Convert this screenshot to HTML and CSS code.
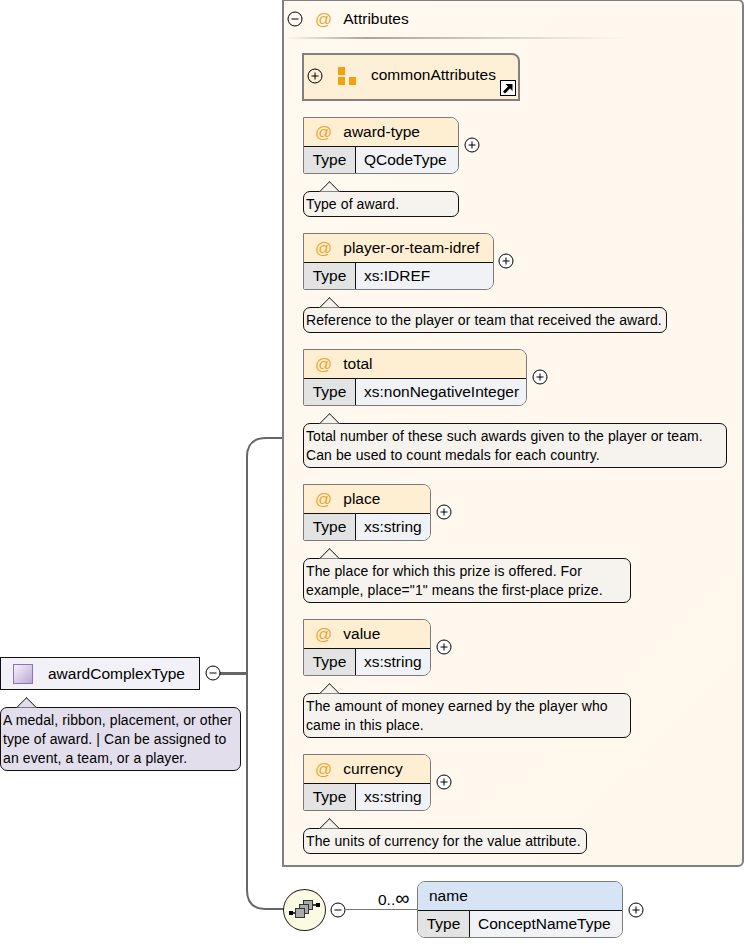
FILE: index.html
```html
<!DOCTYPE html>
<html lang="en">
<head>
<meta charset="utf-8">
<title>awardComplexType</title>
<link rel="stylesheet" href="styles.css">
</head>
<body>
<svg class="wires" width="745" height="945" viewBox="0 0 745 945">
  <path class="wire wire-main" d="M220 673.500H247"/>
  <path class="wire" d="M283 438H266Q247 438 247 457V890Q247 909 266 909H284"/>
  <path class="wire-thin" d="M346 909.500H418"/>
</svg>

<div class="root-node">
  <div class="root-box">
    <span class="type-icon"></span>
    <span class="root-name">awardComplexType</span>
  </div>
  <svg class="toggle root-toggle" viewBox="0 0 16 16"><circle cx="8" cy="8" r="7"/><path d="M4.500 8h7"/></svg>
  <div class="callout callout-root">A medal, ribbon, placement, or other type of award. | Can be assigned to an event, a team, or a player.</div>
</div>

<section class="panel">
  <header class="panel-head">
    <svg class="toggle" viewBox="0 0 16 16"><circle cx="8" cy="8" r="7"/><path d="M4.500 8h7"/></svg>
    <span class="at">@</span>
    <span class="panel-title">Attributes</span>
  </header>
  <div class="panel-body">
    <div class="group-ref">
      <svg class="toggle" viewBox="0 0 16 16"><circle cx="8" cy="8" r="7"/><path d="M4.500 8h7M8 4.500v7"/></svg>
      <svg class="group-icon" viewBox="0 0 18 18"><path d="M0 0h7v8H0zM0 10h7v8H0zM11 10h7v8h-7z"/></svg>
      <span class="group-name">commonAttributes</span>
      <svg class="ref-arrow" viewBox="0 0 16 16"><rect x=".5" y=".5" width="15" height="15"/><path d="M3 11.500L8 6.500 5.500 4H12.500V11L10 8.500 5 13.500z"/></svg>
    </div>

    <article class="attr">
      <div class="attr-row">
        <div class="card w-156">
          <div class="card-head"><span class="at">@</span><span>award-type</span></div>
          <div class="card-type"><span class="type-label">Type</span><span class="type-value">QCodeType</span></div>
        </div>
        <svg class="toggle" viewBox="0 0 16 16"><circle cx="8" cy="8" r="7"/><path d="M4.500 8h7M8 4.500v7"/></svg>
      </div>
      <div class="callout w-156">Type of award.</div>
    </article>

    <article class="attr">
      <div class="attr-row attr-row-tight">
        <div class="card w-191">
          <div class="card-head"><span class="at">@</span><span>player-or-team-idref</span></div>
          <div class="card-type"><span class="type-label">Type</span><span class="type-value">xs:IDREF</span></div>
        </div>
        <svg class="toggle" viewBox="0 0 16 16"><circle cx="8" cy="8" r="7"/><path d="M4.500 8h7M8 4.500v7"/></svg>
      </div>
      <div class="callout w-364">Reference to the player or team that received the award.</div>
    </article>

    <article class="attr">
      <div class="attr-row">
        <div class="card w-224">
          <div class="card-head"><span class="at">@</span><span>total</span></div>
          <div class="card-type"><span class="type-label">Type</span><span class="type-value">xs:nonNegativeInteger</span></div>
        </div>
        <svg class="toggle" viewBox="0 0 16 16"><circle cx="8" cy="8" r="7"/><path d="M4.500 8h7M8 4.500v7"/></svg>
      </div>
      <div class="callout w-424">Total number of these such awards given to the player or team. Can be used to count medals for each country.</div>
    </article>

    <article class="attr">
      <div class="attr-row">
        <div class="card w-128">
          <div class="card-head"><span class="at">@</span><span>place</span></div>
          <div class="card-type"><span class="type-label">Type</span><span class="type-value">xs:string</span></div>
        </div>
        <svg class="toggle" viewBox="0 0 16 16"><circle cx="8" cy="8" r="7"/><path d="M4.500 8h7M8 4.500v7"/></svg>
      </div>
      <div class="callout w-328">The place for which this prize is offered. For example, place="1" means the first-place prize.</div>
    </article>

    <article class="attr">
      <div class="attr-row">
        <div class="card w-128">
          <div class="card-head"><span class="at">@</span><span>value</span></div>
          <div class="card-type"><span class="type-label">Type</span><span class="type-value">xs:string</span></div>
        </div>
        <svg class="toggle" viewBox="0 0 16 16"><circle cx="8" cy="8" r="7"/><path d="M4.500 8h7M8 4.500v7"/></svg>
      </div>
      <div class="callout w-328">The amount of money earned by the player who came in this place.</div>
    </article>

    <article class="attr">
      <div class="attr-row">
        <div class="card w-128">
          <div class="card-head"><span class="at">@</span><span>currency</span></div>
          <div class="card-type"><span class="type-label">Type</span><span class="type-value">xs:string</span></div>
        </div>
        <svg class="toggle" viewBox="0 0 16 16"><circle cx="8" cy="8" r="7"/><path d="M4.500 8h7M8 4.500v7"/></svg>
      </div>
      <div class="callout w-284">The units of currency for the value attribute.</div>
    </article>
  </div>
</section>

<div class="seq-node">
  <div class="seq-circle">
    <svg viewBox="0 0 37 28" width="37" height="28">
      <path class="seq-line" d="M7 17h3M26 9h4"/>
      <path class="seq-dot" d="M3 15h4v4H3zM30 7h4v4h-4z"/>
      <rect class="seq-sq" x="17.500" y="4.500" width="9" height="9"/>
      <rect class="seq-sq" x="13.500" y="8.500" width="9" height="9"/>
      <rect class="seq-sq" x="9.500" y="12.500" width="9" height="9"/>
    </svg>
  </div>
  <svg class="toggle" viewBox="0 0 16 16"><circle cx="8" cy="8" r="7"/><path d="M4.500 8h7"/></svg>
  <span class="occurs">0..<span class="inf">∞</span></span>
  <div class="card card-name">
    <div class="card-head head-blue"><span>name</span></div>
    <div class="card-type"><span class="type-label">Type</span><span class="type-value">ConceptNameType</span></div>
  </div>
  <svg class="toggle" viewBox="0 0 16 16"><circle cx="8" cy="8" r="7"/><path d="M4.500 8h7M8 4.500v7"/></svg>
</div>
</body>
</html>
```
FILE: styles.css
```css
html, body {
  margin: 0;
  padding: 0;
}
body {
  position: relative;
  width: 745px;
  height: 945px;
  overflow: hidden;
  background: #fff;
  color: #000;
  font-family: "Liberation Sans", Arial, sans-serif;
  font-size: 15.5px;
}
.wires {
  position: absolute;
  left: 0;
  top: 0;
  fill: none;
}
.wire {
  fill: none;
  stroke: #666;
  stroke-width: 2;
}
.wire-main {
  stroke-width: 3;
}
.wire-thin {
  fill: none;
  stroke: #777;
  stroke-width: 1;
}
.toggle {
  flex: none;
  width: 16px;
  height: 16px;
  fill: #fff;
  stroke: #000;
  stroke-width: 1;
}
.panel .panel-head .toggle,
.panel .group-ref .toggle {
  fill: none;
}
.at {
  color: #eba52d;
  font-size: 17px;
  line-height: 1;
}

/* root node */
.root-node {
  position: absolute;
  left: 0;
  top: 657px;
  width: 245px;
}
.root-box {
  display: flex;
  align-items: center;
  box-sizing: border-box;
  width: 200px;
  height: 33px;
  border: 1px solid #111;
  background: #f3f1f8;
}
.type-icon {
  box-sizing: border-box;
  width: 20px;
  height: 20px;
  margin-left: 12px;
  border: 1px solid #8d72b5;
  background: linear-gradient(135deg, #f6f3fa, #b9a7d6);
}
.root-name {
  margin-left: 15px;
}
.root-toggle {
  position: absolute;
  left: 205px;
  top: 8px;
}

/* callouts */
.callout {
  position: relative;
  box-sizing: border-box;
  margin-top: 17px;
  padding: 3px 2px 2px 2px;
  border: 1px solid #111;
  border-radius: 7px;
  background: #f6f3ee;
  font-size: 14px;
  letter-spacing: 0.1px;
  line-height: 19px;
}
.callout::before {
  content: "";
  position: absolute;
  left: 18px;
  top: -8px;
  width: 15px;
  height: 15px;
  box-sizing: border-box;
  background: inherit;
  border-left: 1px solid #111;
  border-top: 1px solid #111;
  transform: rotate(45deg);
  clip-path: polygon(0 0, 100% 0, 0 100%);
}
.callout-root {
  width: 241px;
  background: #e3deec;
}

/* attributes panel */
.panel {
  position: absolute;
  left: 282px;
  top: -1px;
  box-sizing: border-box;
  width: 462px;
  height: 868px;
  border: 2px solid #808080;
  border-radius: 0 6px 6px 0;
  background: linear-gradient(135deg, #fff9f0, #fef7ec);
}
.panel-head {
  display: flex;
  align-items: center;
  box-sizing: border-box;
  height: 38px;
  padding-left: 3px;
  padding-bottom: 2px;
  background: linear-gradient(90deg, transparent, #aaa49a 18%, #fff9f0 75%) no-repeat left bottom / 100% 2px;
}
.panel-head .at {
  margin-left: 12px;
}
.panel-title {
  margin-left: 11px;
}
.panel-body {
  display: flex;
  flex-direction: column;
  gap: 16px;
  padding: 14px 0 0 18px;
}
.group-ref {
  position: relative;
  display: flex;
  align-items: center;
  box-sizing: border-box;
  width: 218px;
  height: 48px;
  border: 2px solid #808080;
  border-radius: 0 8px 0 0;
  background: #fdf0d6;
  padding-left: 3px;
}
.group-ref .toggle {
  margin-bottom: 2px;
}
.group-icon {
  width: 18px;
  height: 18px;
  margin-left: 15px;
  margin-top: -2px;
  fill: #f2a20c;
  stroke: none;
}
.group-name {
  margin-left: 15px;
  margin-bottom: 4px;
}
.ref-arrow {
  position: absolute;
  right: 2px;
  bottom: 3px;
  width: 16px;
  height: 16px;
}
.ref-arrow rect {
  fill: #fff;
  stroke: #000;
}
.ref-arrow path {
  fill: #000;
}
.attr {
  display: flex;
  flex-direction: column;
  align-items: flex-start;
  margin-left: 1px;
}
.attr-row {
  display: flex;
  align-items: center;
  gap: 5px;
}
.attr-row-tight {
  gap: 4px;
}
.attr-row .toggle {
  margin-bottom: 1px;
}
.card {
  box-sizing: border-box;
  border: 1px solid #7b7b7b;
  border-radius: 0 8px 8px 2px;
  overflow: hidden;
}
.card-head {
  display: flex;
  align-items: center;
  box-sizing: border-box;
  height: 29px;
  padding-left: 11px;
  border-bottom: 1px solid #111;
  background: #feefd2;
  gap: 11px;
}
.card-type {
  display: flex;
  height: 26px;
  background: #f0f2f5;
}
.type-label {
  display: flex;
  align-items: center;
  justify-content: center;
  box-sizing: border-box;
  width: 52px;
  border-right: 1px solid #111;
  background: #e3e3e3;
}
.type-value {
  display: flex;
  align-items: center;
  padding-left: 8px;
}
.w-128 { width: 128px; }
.w-156 { width: 156px; }
.w-191 { width: 191px; }
.w-224 { width: 224px; }
.w-284 { width: 284px; }
.w-328 { width: 328px; }
.w-364 { width: 364px; }
.w-424 { width: 424px; }

/* sequence */
.seq-node {
  position: absolute;
  left: 283px;
  top: 881px;
  display: flex;
  align-items: center;
}
.seq-circle {
  display: flex;
  align-items: center;
  justify-content: center;
  box-sizing: border-box;
  width: 43px;
  height: 42px;
  margin-top: 1px;
  border: 1px solid #222;
  border-radius: 50%;
  background: #fbfbe3;
}
.seq-line {
  fill: none;
  stroke: #000;
  stroke-width: 1.5;
}
.seq-dot {
  fill: #000;
}
.seq-sq {
  fill: #aaa;
  stroke: #333;
}
.seq-node > .toggle {
  margin-left: 4px;
}
.occurs {
  width: 39px;
  margin-left: 32px;
  margin-top: -23px;
  white-space: nowrap;
}
.inf {
  font-size: 20px;
  line-height: 1;
}
.card-name {
  width: 206px;
  border-radius: 8px;
}
.seq-node > .card + .toggle {
  margin-left: 5px;
}
.head-blue {
  background: #d7e4f6;
}
```
